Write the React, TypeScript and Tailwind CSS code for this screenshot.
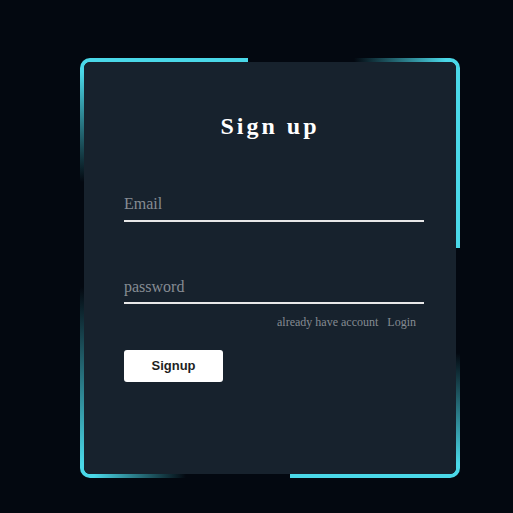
const cyan = 'bg-[#4ad8e8]';

function Frame() {
  // decorative glowing border pieces behind the card
  return (
    <>
      <div className="absolute left-0 top-0 w-[14px] h-[14px] rounded-tl-[10px] border-t-4 border-l-4 border-[#4ad8e8]" />
      <div className={`absolute left-[14px] top-0 w-[154px] h-[4px] ${cyan}`} />
      <div className="absolute left-0 top-[14px] w-[4px] h-[110px] bg-gradient-to-b from-[#4ad8e8] to-transparent" />

      <div className="absolute right-0 top-0 w-[14px] h-[14px] rounded-tr-[10px] border-t-4 border-r-4 border-[#4ad8e8]" />
      <div className="absolute right-[14px] top-0 w-[92px] h-[4px] bg-gradient-to-r from-transparent to-[#4ad8e8]" />
      <div className={`absolute right-0 top-[14px] w-[4px] h-[176px] ${cyan}`} />

      <div className="absolute left-0 bottom-0 w-[14px] h-[14px] rounded-bl-[10px] border-b-4 border-l-4 border-[#4ad8e8]" />
      <div className="absolute left-0 bottom-[14px] w-[4px] h-[177px] bg-gradient-to-t from-[#4ad8e8] to-transparent" />
      <div className="absolute left-[14px] bottom-0 w-[92px] h-[4px] bg-gradient-to-r from-[#4ad8e8] to-transparent" />

      <div className="absolute right-0 bottom-0 w-[14px] h-[14px] rounded-br-[10px] border-b-4 border-r-4 border-[#4ad8e8]" />
      <div className={`absolute right-[14px] bottom-0 w-[156px] h-[4px] ${cyan}`} />
      <div className="absolute right-0 bottom-[14px] w-[4px] h-[111px] bg-gradient-to-t from-[#4ad8e8] to-transparent" />
    </>
  );
}

export default function App() {
  return (
    <div className="min-h-screen w-full bg-[#030810] pl-[80px] pt-[58px]">
      <div className="relative w-[380px] h-[420px] p-[4px]">
        <Frame />
        <div className="relative flex h-full w-full flex-col items-start rounded-[6px] bg-[#17222d] px-[40px] pt-[50px] font-['Liberation_Serif',serif]">
          <h1 className="w-full text-center text-[24px] leading-[28px] font-bold tracking-[3px] text-white">
            Sign up
          </h1>

          <input
            type="text"
            placeholder="Email"
            className="mt-[50px] w-[300px] h-[32px] pb-[2px] bg-transparent border-b-2 border-[#e8e8e8] text-[16px] text-white outline-none placeholder:text-[#868c93]"
          />

          <input
            type="password"
            placeholder="password"
            className="mt-[50px] w-[300px] h-[32px] pb-[1px] bg-transparent border-b-2 border-[#e8e8e8] text-[16px] text-white outline-none placeholder:text-[#868c93]"
          />
          <div className="mt-[11px] flex w-[300px] justify-end gap-[9px] pr-[8px] text-[12px] leading-[14px] text-[#858b92]">
            <span>already have account</span>
            <span>Login</span>
          </div>

          <button className="mt-[21px] w-[99px] h-[32px] rounded-[3px] bg-white font-['Liberation_Sans',sans-serif] text-[13px] font-bold text-[#1f1f1f]">
            Signup
          </button>
        </div>
      </div>
    </div>
  );
}
